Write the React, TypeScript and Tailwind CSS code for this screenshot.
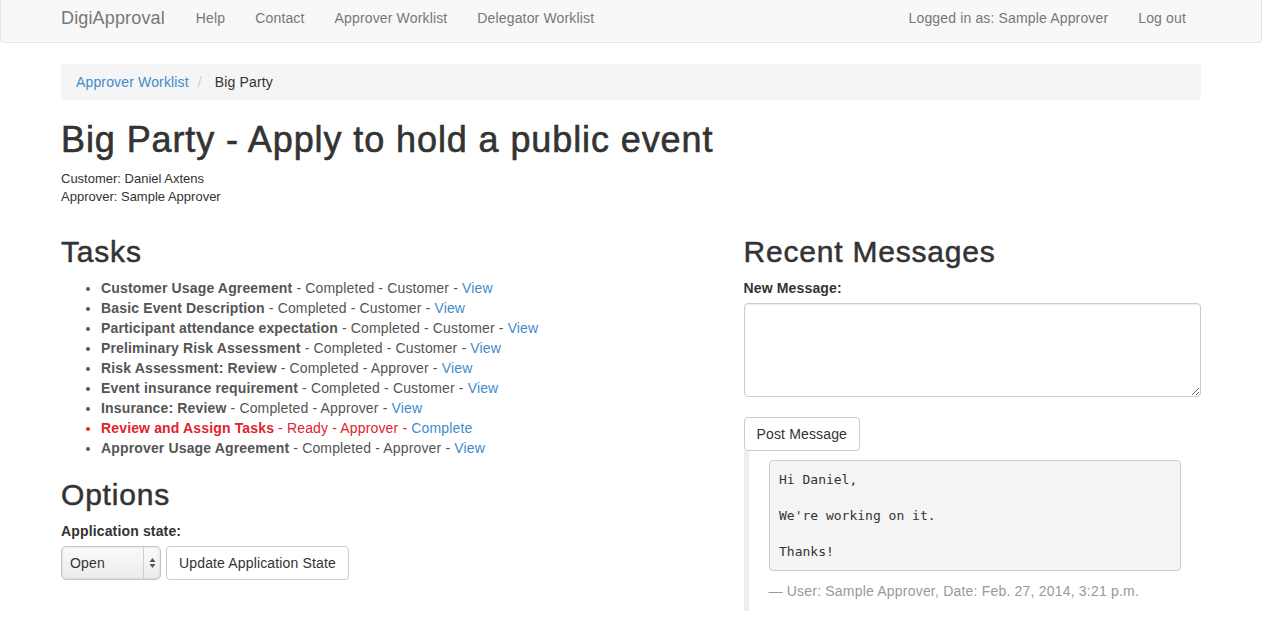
import React from "react";

const tasks: { name: string; status: string; who: string; link: string; red?: boolean }[] = [
  { name: "Customer Usage Agreement", status: "Completed", who: "Customer", link: "View" },
  { name: "Basic Event Description", status: "Completed", who: "Customer", link: "View" },
  { name: "Participant attendance expectation", status: "Completed", who: "Customer", link: "View" },
  { name: "Preliminary Risk Assessment", status: "Completed", who: "Customer", link: "View" },
  { name: "Risk Assessment: Review", status: "Completed", who: "Approver", link: "View" },
  { name: "Event insurance requirement", status: "Completed", who: "Customer", link: "View" },
  { name: "Insurance: Review", status: "Completed", who: "Approver", link: "View" },
  { name: "Review and Assign Tasks", status: "Ready", who: "Approver", link: "Complete", red: true },
  { name: "Approver Usage Agreement", status: "Completed", who: "Approver", link: "View" },
];

export default function App() {
  return (
    <div className="min-h-[632px] bg-white font-['Liberation_Sans',Arial,sans-serif] text-[14px] leading-[20px] tracking-[0.15px] text-[#333]">
      {/* Navbar */}
      <div className="h-[43px] bg-[#f8f8f8] border border-t-0 border-[#e7e7e7] rounded-b-[4px]">
        <div className="w-[1170px] mx-auto px-[15px] pt-[8px] flex items-start">
          <span className="text-[18px] leading-[20px] text-[#777] pr-[16px]">DigiApproval</span>
          <span className="px-[15px] text-[#777]">Help</span>
          <span className="px-[15px] text-[#777]">Contact</span>
          <span className="px-[15px] text-[#777]">Approver Worklist</span>
          <span className="px-[15px] text-[#777]">Delegator Worklist</span>
          <div className="ml-auto flex">
            <span className="px-[15px] text-[#777]">Logged in as: Sample Approver</span>
            <span className="px-[15px] text-[#777]">Log out</span>
          </div>
        </div>
      </div>

      <div className="w-[1170px] mx-auto px-[15px]">
        {/* Breadcrumb */}
        <div className="mt-[21px] h-[36px] bg-[#f5f5f5] rounded-[4px] px-[15px] py-[8px] flex">
          <span className="text-[#428bca]">Approver Worklist</span>
          <span className="pl-[9px] pr-[13px] text-[#ccc]">/</span>
          <span className="text-[#333]">Big Party</span>
        </div>

        <h1 className="mt-[20px] mb-[10px] text-[36px] leading-[40px] font-normal tracking-[0.9px] [-webkit-text-stroke:0.6px_#333] text-[#333]">
          Big Party - Apply to hold a public event
        </h1>
        <div className="text-[13px] leading-[18px] tracking-normal text-[#333]">
          <div>Customer: Daniel Axtens</div>
          <div>Approver: Sample Approver</div>
        </div>

        <div className="flex -mx-[15px] mt-[29px]">
          {/* Left column */}
          <div className="w-7/12 px-[15px]">
            <h2 className="text-[30px] leading-[33px] font-normal tracking-[0.8px] [-webkit-text-stroke:0.5px_#333] text-[#333] mb-[10px]">Tasks</h2>
            <ul className="list-disc pl-[40px] text-[#555]">
              {tasks.map((t) => (
                <li key={t.name} className={t.red ? "text-[#e0242c]" : ""}>
                  <b>{t.name}</b> - {t.status} - {t.who} -{" "}
                  <span className="text-[#428bca]">{t.link}</span>
                </li>
              ))}
            </ul>
            <h2 className="mt-[20px] text-[30px] leading-[33px] font-normal tracking-[0.8px] [-webkit-text-stroke:0.5px_#333] text-[#333] mb-[10px]">Options</h2>
            <div className="font-bold mb-[5px]">Application state:</div>
            <div className="flex gap-[5px]">
              <div className="w-[100px] h-[34px] rounded-[5px] border border-[#c4c4c4] bg-[linear-gradient(#fafafa,#ececec)] shadow-[inset_0_0_3px_rgba(0,0,0,0.12)] flex items-center">
                <span className="flex-1 pl-[8px] text-[#333]">Open</span>
                <div className="w-[17px] h-full border-l border-[#d0d0d0] flex items-center justify-center">
                  <svg width="7" height="12" viewBox="0 0 7 12">
                    <polygon points="3.5,1 6.5,5 0.5,5" fill="#555" />
                    <polygon points="0.5,7 6.5,7 3.5,11" fill="#555" />
                  </svg>
                </div>
              </div>
              <div className="h-[34px] px-[12px] border border-[#ccc] rounded-[4px] bg-white flex items-center text-[#333]">
                Update Application State
              </div>
            </div>
          </div>

          {/* Right column */}
          <div className="w-5/12 px-[15px]">
            <h2 className="text-[30px] leading-[33px] font-normal tracking-[0.8px] [-webkit-text-stroke:0.5px_#333] text-[#333] mb-[10px]">Recent Messages</h2>
            <div className="font-bold mb-[5px]">New Message:</div>
            <textarea
              className="block w-full h-[94px] border border-[#ccc] rounded-[4px] shadow-[inset_0_1px_1px_rgba(0,0,0,0.075)] mb-[20px] resize-y"
              readOnly
            />
            <div className="inline-flex h-[34px] px-[12px] border border-[#ccc] rounded-[4px] bg-white items-center text-[#333]">
              Post Message
            </div>
            <div className="border-l-[5px] border-[#eee] py-[10px] px-[20px] -mt-[1px]">
              <pre className="bg-[#f5f5f5] border border-[#ccc] rounded-[4px] p-[9.5px] font-['DejaVu_Sans_Mono',monospace] text-[13px] leading-[18px] tracking-normal text-[#333] mb-[10px] whitespace-pre">
{`Hi Daniel,

We're working on it.

Thanks!`}
              </pre>
              <div className="text-[14px] leading-[20px] tracking-[0.2px] text-[#999]">
                {"\u2014\u00a0"}User: Sample Approver, Date: Feb. 27, 2014, 3:21 p.m.
              </div>
            </div>
          </div>
        </div>
      </div>
    </div>
  );
}
